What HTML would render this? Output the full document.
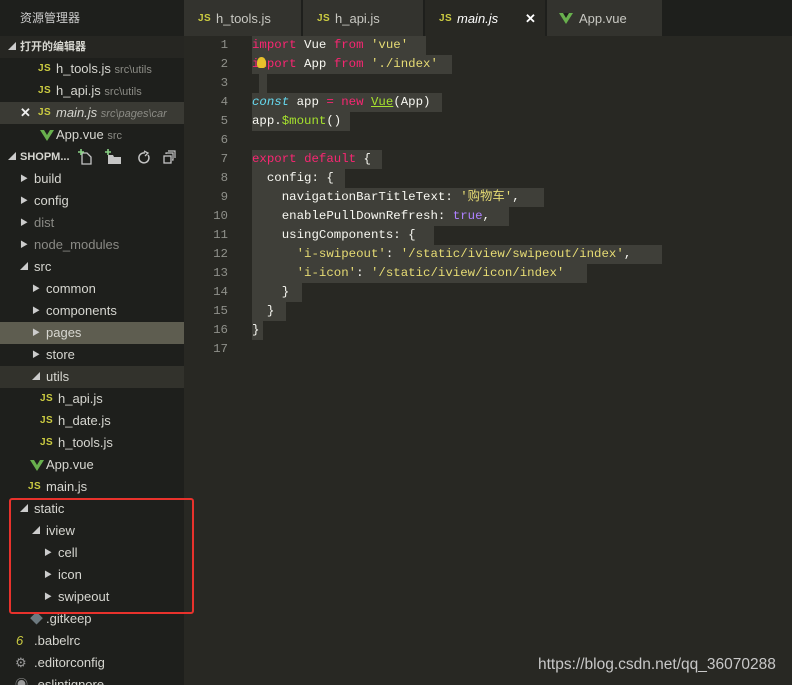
<!DOCTYPE html>
<html><head><meta charset="utf-8">
<style>
*{margin:0;padding:0;box-sizing:border-box}
body{width:792px;height:685px;overflow:hidden;background:#282823;font-family:"Liberation Sans","Noto Sans CJK SC",sans-serif;position:relative}
#side{position:absolute;left:0;top:0;width:184px;height:685px;background:#1e1f1c;overflow:hidden}
.r{position:absolute;left:0;width:184px;height:22px;line-height:22px;font-size:13px;color:#d6d6d0;white-space:nowrap}
.r span.t{position:absolute;top:0}
.arr{position:absolute;top:0;font-size:8px;color:#ccc}
.js{position:absolute;top:0;font-size:10px;font-weight:bold;color:#cbcb41;letter-spacing:0.5px}
.vue{position:absolute;top:6px;width:0;height:0;border-left:7px solid transparent;border-right:7px solid transparent;border-top:11px solid #68b04d}
.vue:after{content:"";position:absolute;left:-3px;top:-11px;border-left:3px solid transparent;border-right:3px solid transparent;border-top:5px solid #1e1f1c}
.d{color:#8c8c86;font-size:11px}
#tabs{position:absolute;left:184px;top:0;width:608px;height:36px;background:#1e1f1c}
.tab{position:absolute;top:0;height:36px;line-height:38px;background:#33332e;font-size:13px;color:#c8c8c2}
.tab .js{top:1px;line-height:36px}
#code{position:absolute;left:184px;top:36px;width:608px;font-family:"Liberation Mono","Noto Sans CJK SC",monospace;font-size:12.4px}
.ln{position:absolute;left:0;width:44px;text-align:right;color:#8f908a;height:19px;line-height:19px}
.l{position:absolute;left:68px;height:19px;line-height:19px;color:#f8f8f2;white-space:pre}
.hl{position:absolute;background:#3f3f39;height:19px}
.k{color:#f92672}.s{color:#e6db74}.c{color:#66d9ef;font-style:italic}.p{color:#ae81ff}.f{color:#a6e22e}
</style></head><body>
<div id="side">
<div class="r" style="top:7px"><span class="t" style="left:20px;font-size:12px;color:#ccc">资源管理器</span></div>
<div class="r" style="top:36px;background:#262622;font-weight:bold;font-size:11px"><span class="arr" style="left:8px">◢</span><span class="t" style="left:20px;font-size:11px">打开的编辑器</span></div>
<div class="r" style="top:58px"><span class="js" style="left:38px">JS</span><span class="t" style="left:56px">h_tools.js <span class="d">src\utils</span></span></div>
<div class="r" style="top:80px"><span class="js" style="left:38px">JS</span><span class="t" style="left:56px">h_api.js <span class="d">src\utils</span></span></div>
<div class="r" style="top:102px;background:#3a3a34"><span class="t" style="left:20px;font-weight:bold;color:#eee">✕</span><span class="js" style="left:38px">JS</span><span class="t" style="left:56px;font-style:italic">main.js <span class="d">src\pages\car</span></span></div>
<div class="r" style="top:124px"><span class="vue" style="left:40px"></span><span class="t" style="left:56px">App.vue <span class="d">src</span></span></div>
<div class="r" style="top:146px;font-weight:bold;font-size:11px"><span class="arr" style="left:8px">◢</span><span class="t" style="left:20px;font-size:11px">SHOPM...</span>
<svg style="position:absolute;left:78px;top:3px" width="100" height="16"><path d="M4 4h5l4 4v7H4z" fill="none" stroke="#c5c5c5" stroke-width="1.3"/><path d="M3 0v6M0 3h6" stroke="#89d185" stroke-width="1.6"/><path d="M30 6h5l1 2h7v7H30z" fill="#c5c5c5"/><path d="M30 0v6M27 3h6" stroke="#89d185" stroke-width="1.6"/><path d="M67 4a5 5 0 1 0 3 2" fill="none" stroke="#c5c5c5" stroke-width="1.5"/><path d="M66 2l4 2-3 3" fill="none" stroke="#c5c5c5" stroke-width="1.3"/><rect x="86" y="7" width="7" height="7" fill="none" stroke="#c5c5c5" stroke-width="1.3"/><path d="M88 5V4h7v7h-1M90 2h7v7" fill="none" stroke="#c5c5c5" stroke-width="1.2"/></svg></div>
<div class="r" style="top:168px"><span class="arr" style="left:20px">▶</span><span class="t" style="left:34px">build</span></div>
<div class="r" style="top:190px"><span class="arr" style="left:20px">▶</span><span class="t" style="left:34px">config</span></div>
<div class="r" style="top:212px;color:#8a8a85"><span class="arr" style="left:20px">▶</span><span class="t" style="left:34px">dist</span></div>
<div class="r" style="top:234px;color:#8a8a85"><span class="arr" style="left:20px">▶</span><span class="t" style="left:34px">node_modules</span></div>
<div class="r" style="top:256px"><span class="arr" style="left:20px">◢</span><span class="t" style="left:34px">src</span></div>
<div class="r" style="top:278px"><span class="arr" style="left:32px">▶</span><span class="t" style="left:46px">common</span></div>
<div class="r" style="top:300px"><span class="arr" style="left:32px">▶</span><span class="t" style="left:46px">components</span></div>
<div class="r" style="top:322px;background:#5e5d50"><span class="arr" style="left:32px">▶</span><span class="t" style="left:46px">pages</span></div>
<div class="r" style="top:344px"><span class="arr" style="left:32px">▶</span><span class="t" style="left:46px">store</span></div>
<div class="r" style="top:366px;background:#32322c"><span class="arr" style="left:32px">◢</span><span class="t" style="left:46px">utils</span></div>
<div class="r" style="top:388px"><span class="js" style="left:40px">JS</span><span class="t" style="left:58px">h_api.js</span></div>
<div class="r" style="top:410px"><span class="js" style="left:40px">JS</span><span class="t" style="left:58px">h_date.js</span></div>
<div class="r" style="top:432px"><span class="js" style="left:40px">JS</span><span class="t" style="left:58px">h_tools.js</span></div>
<div class="r" style="top:454px"><span class="vue" style="left:30px"></span><span class="t" style="left:46px">App.vue</span></div>
<div class="r" style="top:476px"><span class="js" style="left:28px">JS</span><span class="t" style="left:46px">main.js</span></div>
<div class="r" style="top:498px"><span class="arr" style="left:20px">◢</span><span class="t" style="left:34px">static</span></div>
<div class="r" style="top:520px"><span class="arr" style="left:32px">◢</span><span class="t" style="left:46px">iview</span></div>
<div class="r" style="top:542px"><span class="arr" style="left:44px">▶</span><span class="t" style="left:58px">cell</span></div>
<div class="r" style="top:564px"><span class="arr" style="left:44px">▶</span><span class="t" style="left:58px">icon</span></div>
<div class="r" style="top:586px"><span class="arr" style="left:44px">▶</span><span class="t" style="left:58px">swipeout</span></div>
<div class="r" style="top:608px"><span class="t" style="left:30px;color:#6d7a80">◆</span><span class="t" style="left:46px">.gitkeep</span></div>
<div class="r" style="top:630px"><span class="t" style="left:16px;color:#cbcb41;font-style:italic">6</span><span class="t" style="left:34px">.babelrc</span></div>
<div class="r" style="top:652px"><span class="t" style="left:15px;color:#9a9a9a">⚙</span><span class="t" style="left:34px">.editorconfig</span></div>
<div class="r" style="top:674px"><span class="t" style="left:15px;color:#9a9a9a">◉</span><span class="t" style="left:34px">.eslintignore</span></div>
</div>
<div style="position:absolute;left:9px;top:498px;width:185px;height:116px;border:2px solid #e8322c;border-radius:3px"></div>
<div id="tabs">
<div class="tab" style="left:0;width:117px"><span class="js" style="left:14px">JS</span><span style="position:absolute;left:32px">h_tools.js</span></div>
<div class="tab" style="left:119px;width:120px"><span class="js" style="left:14px">JS</span><span style="position:absolute;left:32px">h_api.js</span></div>
<div class="tab" style="left:241px;width:120px;background:#282823;color:#fff"><span class="js" style="left:14px">JS</span><span style="position:absolute;left:32px;font-style:italic">main.js</span><span style="position:absolute;left:100px;font-weight:bold">✕</span></div>
<div class="tab" style="left:363px;width:115px"><span class="vue" style="left:12px;top:13px;border-top-color:#68b04d"></span><span style="position:absolute;left:32px">App.vue</span></div>
</div>
<div id="code">
<div class="hl" style="left:68px;top:0;width:174px"></div>
<div class="hl" style="left:68px;top:19px;width:200px"></div>
<div class="hl" style="left:75px;top:38px;width:8px"></div>
<div class="hl" style="left:68px;top:57px;width:190px"></div>
<div class="hl" style="left:68px;top:76px;width:98px"></div>
<div class="hl" style="left:68px;top:114px;width:130px"></div>
<div class="hl" style="left:68px;top:133px;width:93px"></div>
<div class="hl" style="left:68px;top:152px;width:292px"></div>
<div class="hl" style="left:68px;top:171px;width:257px"></div>
<div class="hl" style="left:68px;top:190px;width:182px"></div>
<div class="hl" style="left:68px;top:209px;width:410px"></div>
<div class="hl" style="left:68px;top:228px;width:335px"></div>
<div class="hl" style="left:68px;top:247px;width:50px"></div>
<div class="hl" style="left:68px;top:266px;width:34px"></div>
<div class="hl" style="left:68px;top:285px;width:11px"></div>
<div class="ln" style="top:0">1</div><div class="ln" style="top:19px">2</div><div class="ln" style="top:38px">3</div><div class="ln" style="top:57px">4</div><div class="ln" style="top:76px">5</div><div class="ln" style="top:95px">6</div><div class="ln" style="top:114px">7</div><div class="ln" style="top:133px">8</div><div class="ln" style="top:152px">9</div><div class="ln" style="top:171px">10</div><div class="ln" style="top:190px">11</div><div class="ln" style="top:209px">12</div><div class="ln" style="top:228px">13</div><div class="ln" style="top:247px">14</div><div class="ln" style="top:266px">15</div><div class="ln" style="top:285px">16</div><div class="ln" style="top:304px">17</div>
<div class="l" style="top:0"><span class="k">import</span> Vue <span class="k">from</span> <span class="s">'vue'</span></div>
<div class="l" style="top:19px"><span class="k">import</span> App <span class="k">from</span> <span class="s">'./index'</span></div>
<div style="position:absolute;left:73px;top:21px;width:9px;height:11px;border-radius:50% 50% 30% 30%;background:#e8c02b"></div>
<div class="l" style="top:57px"><span class="c">const</span> app <span class="k">=</span> <span class="k">new</span> <span class="f" style="text-decoration:underline">Vue</span>(App)</div>
<div class="l" style="top:76px">app.<span class="f">$mount</span>()</div>
<div class="l" style="top:114px"><span class="k">export</span> <span class="k">default</span> {</div>
<div class="l" style="top:133px">  config: {</div>
<div class="l" style="top:152px">    navigationBarTitleText: <span class="s">'购物车'</span>,</div>
<div class="l" style="top:171px">    enablePullDownRefresh: <span class="p">true</span>,</div>
<div class="l" style="top:190px">    usingComponents: {</div>
<div class="l" style="top:209px">      <span class="s">'i-swipeout'</span>: <span class="s">'/static/iview/swipeout/index'</span>,</div>
<div class="l" style="top:228px">      <span class="s">'i-icon'</span>: <span class="s">'/static/iview/icon/index'</span></div>
<div class="l" style="top:247px">    }</div>
<div class="l" style="top:266px">  }</div>
<div class="l" style="top:285px">}</div>
</div>
<div style="position:absolute;left:538px;top:656px;font-size:15.5px;color:#c8c8c8;font-family:'Liberation Sans',sans-serif">https://blog.csdn.net/qq_36070288</div>
</body></html>
